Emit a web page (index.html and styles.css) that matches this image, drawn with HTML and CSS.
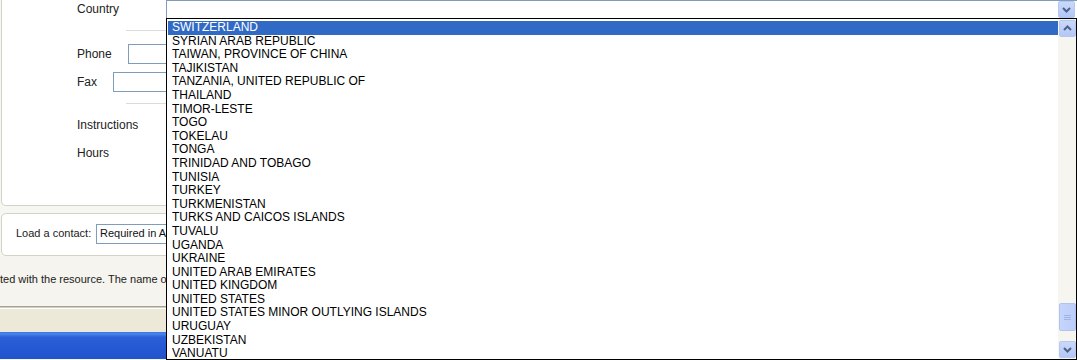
FILE: index.html
```html
<!DOCTYPE html>
<html>

<head>
    <meta charset="utf-8" />
    <title>Contact</title>
    <link rel="stylesheet" href="styles.css">
</head>

<body>
    <div class="screen">
        <div class="panel form-panel">
            <div class="row row-country">
                <span class="label label-country">Country</span>
                <div class="combo">
                    <span class="combo-btn">
                        <svg width="15" height="15" viewBox="0 0 15 15"><path d="M4 6 L7.5 9.5 L11 6" fill="none" stroke="#4d6185" stroke-width="2"/></svg>
                    </span>
                </div>
            </div>
            <div class="rule"></div>
            <div class="row row-phone">
                <span class="label">Phone</span>
                <span class="field"></span>
            </div>
            <div class="row row-fax">
                <span class="label">Fax</span>
                <span class="field"></span>
            </div>
            <div class="rule"></div>
            <div class="row row-text row-instr">
                <span class="label">Instructions</span>
            </div>
            <div class="row row-text row-hours">
                <span class="label">Hours</span>
            </div>
        </div>

        <div class="panel load-panel">
            <span class="load-label">Load a contact:</span>
            <span class="field load-field">Required in A</span>
        </div>

        <div class="status">ted with the resource. The name o</div>
        <div class="divider"></div>
        <div class="footer"></div>
        <div class="taskbar"></div>

        <!-- liste ouverte du champ Country -->
        <div class="dropdown">
            <ul class="options">
                <li class="selected">SWITZERLAND</li>
                <li>SYRIAN ARAB REPUBLIC</li>
                <li>TAIWAN, PROVINCE OF CHINA</li>
                <li>TAJIKISTAN</li>
                <li>TANZANIA, UNITED REPUBLIC OF</li>
                <li>THAILAND</li>
                <li>TIMOR-LESTE</li>
                <li>TOGO</li>
                <li>TOKELAU</li>
                <li>TONGA</li>
                <li>TRINIDAD AND TOBAGO</li>
                <li>TUNISIA</li>
                <li>TURKEY</li>
                <li>TURKMENISTAN</li>
                <li>TURKS AND CAICOS ISLANDS</li>
                <li>TUVALU</li>
                <li>UGANDA</li>
                <li>UKRAINE</li>
                <li>UNITED ARAB EMIRATES</li>
                <li>UNITED KINGDOM</li>
                <li>UNITED STATES</li>
                <li>UNITED STATES MINOR OUTLYING ISLANDS</li>
                <li>URUGUAY</li>
                <li>UZBEKISTAN</li>
                <li>VANUATU</li>
            </ul>
            <div class="scrollbar">
                <span class="sb-btn">
                    <svg width="15" height="15" viewBox="0 0 15 15"><path d="M4 9 L7.5 5.5 L11 9" fill="none" stroke="#4d6185" stroke-width="2"/></svg>
                </span>
                <div class="sb-track">
                    <span class="sb-thumb">
                        <svg width="7" height="7" viewBox="0 0 7 7"><path d="M0 1.5 H7 M0 3.5 H7 M0 5.5 H7" stroke="#9fb4ea" stroke-width="1"/></svg>
                    </span>
                </div>
                <span class="sb-btn">
                    <svg width="15" height="15" viewBox="0 0 15 15"><path d="M4 6 L7.5 9.5 L11 6" fill="none" stroke="#4d6185" stroke-width="2"/></svg>
                </span>
            </div>
        </div>
    </div>
</body>

</html>
```

FILE: styles.css
```css
   body {
       margin: 0;
       font-family: "Liberation Sans", Arial, sans-serif;
       font-size: 12px;
       color: #222;
   }

   .screen {
       /* fenetre de 1077 x 360, on coupe ce qui depasse */
       position: relative;
       width: 1077px;
       height: 360px;
       overflow: hidden;
       background: #f6f6f3;
   }

   .panel {
       margin-left: 1px;
       width: 1100px;
       background: #fff;
       border: 1px solid #d3d2c6;
       border-radius: 5px;
       box-sizing: border-box;
   }

   .form-panel {
       height: 206px;
       border-top: none;
       border-top-left-radius: 0;
       border-top-right-radius: 0;
       padding-left: 75px;
   }

   .row {
       display: flex;
       align-items: center;
   }

   .row-country {
       height: 19px;
   }

   .label-country {
       width: 89px;
       margin-top: -2px;
   }

   .combo {
       width: 911px;
       height: 19px;
       box-sizing: border-box;
       border: 1px solid #7f9db9;
       border-right: none;
       border-bottom: none;
       display: flex;
       justify-content: flex-end;
       padding: 0 2px 1px 0;
   }

   .combo-btn,
   .sb-btn {
       width: 15px;
       height: 15px;
       border: 1px solid #b7c8f0;
       border-radius: 2px;
       background: linear-gradient(#cad8fb, #b3c7f6);
       display: flex;
   }

   .rule {
       width: 1000px;
       height: 1px;
       margin: 11px 0 0 49px;
       background: #dcdcd6;
   }

   .row-phone {
       margin-top: 13px;
   }

   .row-fax {
       margin-top: 8px;
   }

   .row-fax+.rule {
       margin-top: 11px;
   }

   .field {
       width: 400px;
       height: 20px;
       box-sizing: border-box;
       border: 1px solid #7f9db9;
       margin-left: 16px;
       background: #fff;
   }

   .row-text {
       height: 16px;
   }

   .row-instr {
       margin-top: 13px;
   }

   .row-hours {
       margin-top: 12px;
   }

   .load-panel {
       margin-top: 7px;
       height: 43px;
       display: flex;
       align-items: flex-start;
       padding: 10px 0 0 14px;
       font-size: 11px;
   }

   .load-label {
       width: 80px;
       line-height: 18px;
   }

   .load-field {
       margin-left: 0;
       padding: 2px 0 0 3px;
       font-size: 11px;
       color: #111;
       white-space: nowrap;
   }

   .status {
       height: 50px;
       line-height: 46px;
       font-size: 11px;
       white-space: nowrap;
       background: #f5f4ee;
   }

   .divider {
       height: 1px;
       border-top: 1px solid #a4a39a;
       border-bottom: 1px solid #ffffff;
       background: #cfcdc1;
   }

   .footer {
       height: 23px;
       background: #ece9d8;
   }

   .taskbar {
       height: 27px;
       background: linear-gradient(#3a74e0 0, #4a86ea 2px, #2a60d8 5px, #2458d4 60%, #2253cc);
   }

   /* liste deroulante par dessus le formulaire */
   .dropdown {
       position: absolute;
       left: 166px;
       top: 18px;
       width: 911px;
       height: 342px;
       box-sizing: border-box;
       border: 1px solid #000;
       background: #fff;
       display: flex;
   }

   .options {
       flex: 1;
       list-style: none;
       margin: 0;
       padding: 2px 0 0 1px;
       color: #000;
       overflow: hidden;
   }

   .options li {
       height: 13.6px;
       line-height: 13.6px;
       padding-left: 4px;
       white-space: nowrap;
   }

   .options li.selected {
       background: #316ac5;
       color: #fff;
   }

   .scrollbar {
       width: 17px;
       display: flex;
       flex-direction: column;
       background: #f6f5f0;
       padding: 1px 0 1px 1px;
   }

   .sb-track {
       flex: 1;
       display: flex;
       flex-direction: column;
       justify-content: flex-end;
       padding-bottom: 10px;
   }

   .sb-thumb {
       height: 26px;
       border: 1px solid #b0c4f2;
       border-radius: 2px;
       background: linear-gradient(90deg, #c6d5fb, #bccdf9);
       display: flex;
       align-items: center;
       justify-content: center;
   }
```
